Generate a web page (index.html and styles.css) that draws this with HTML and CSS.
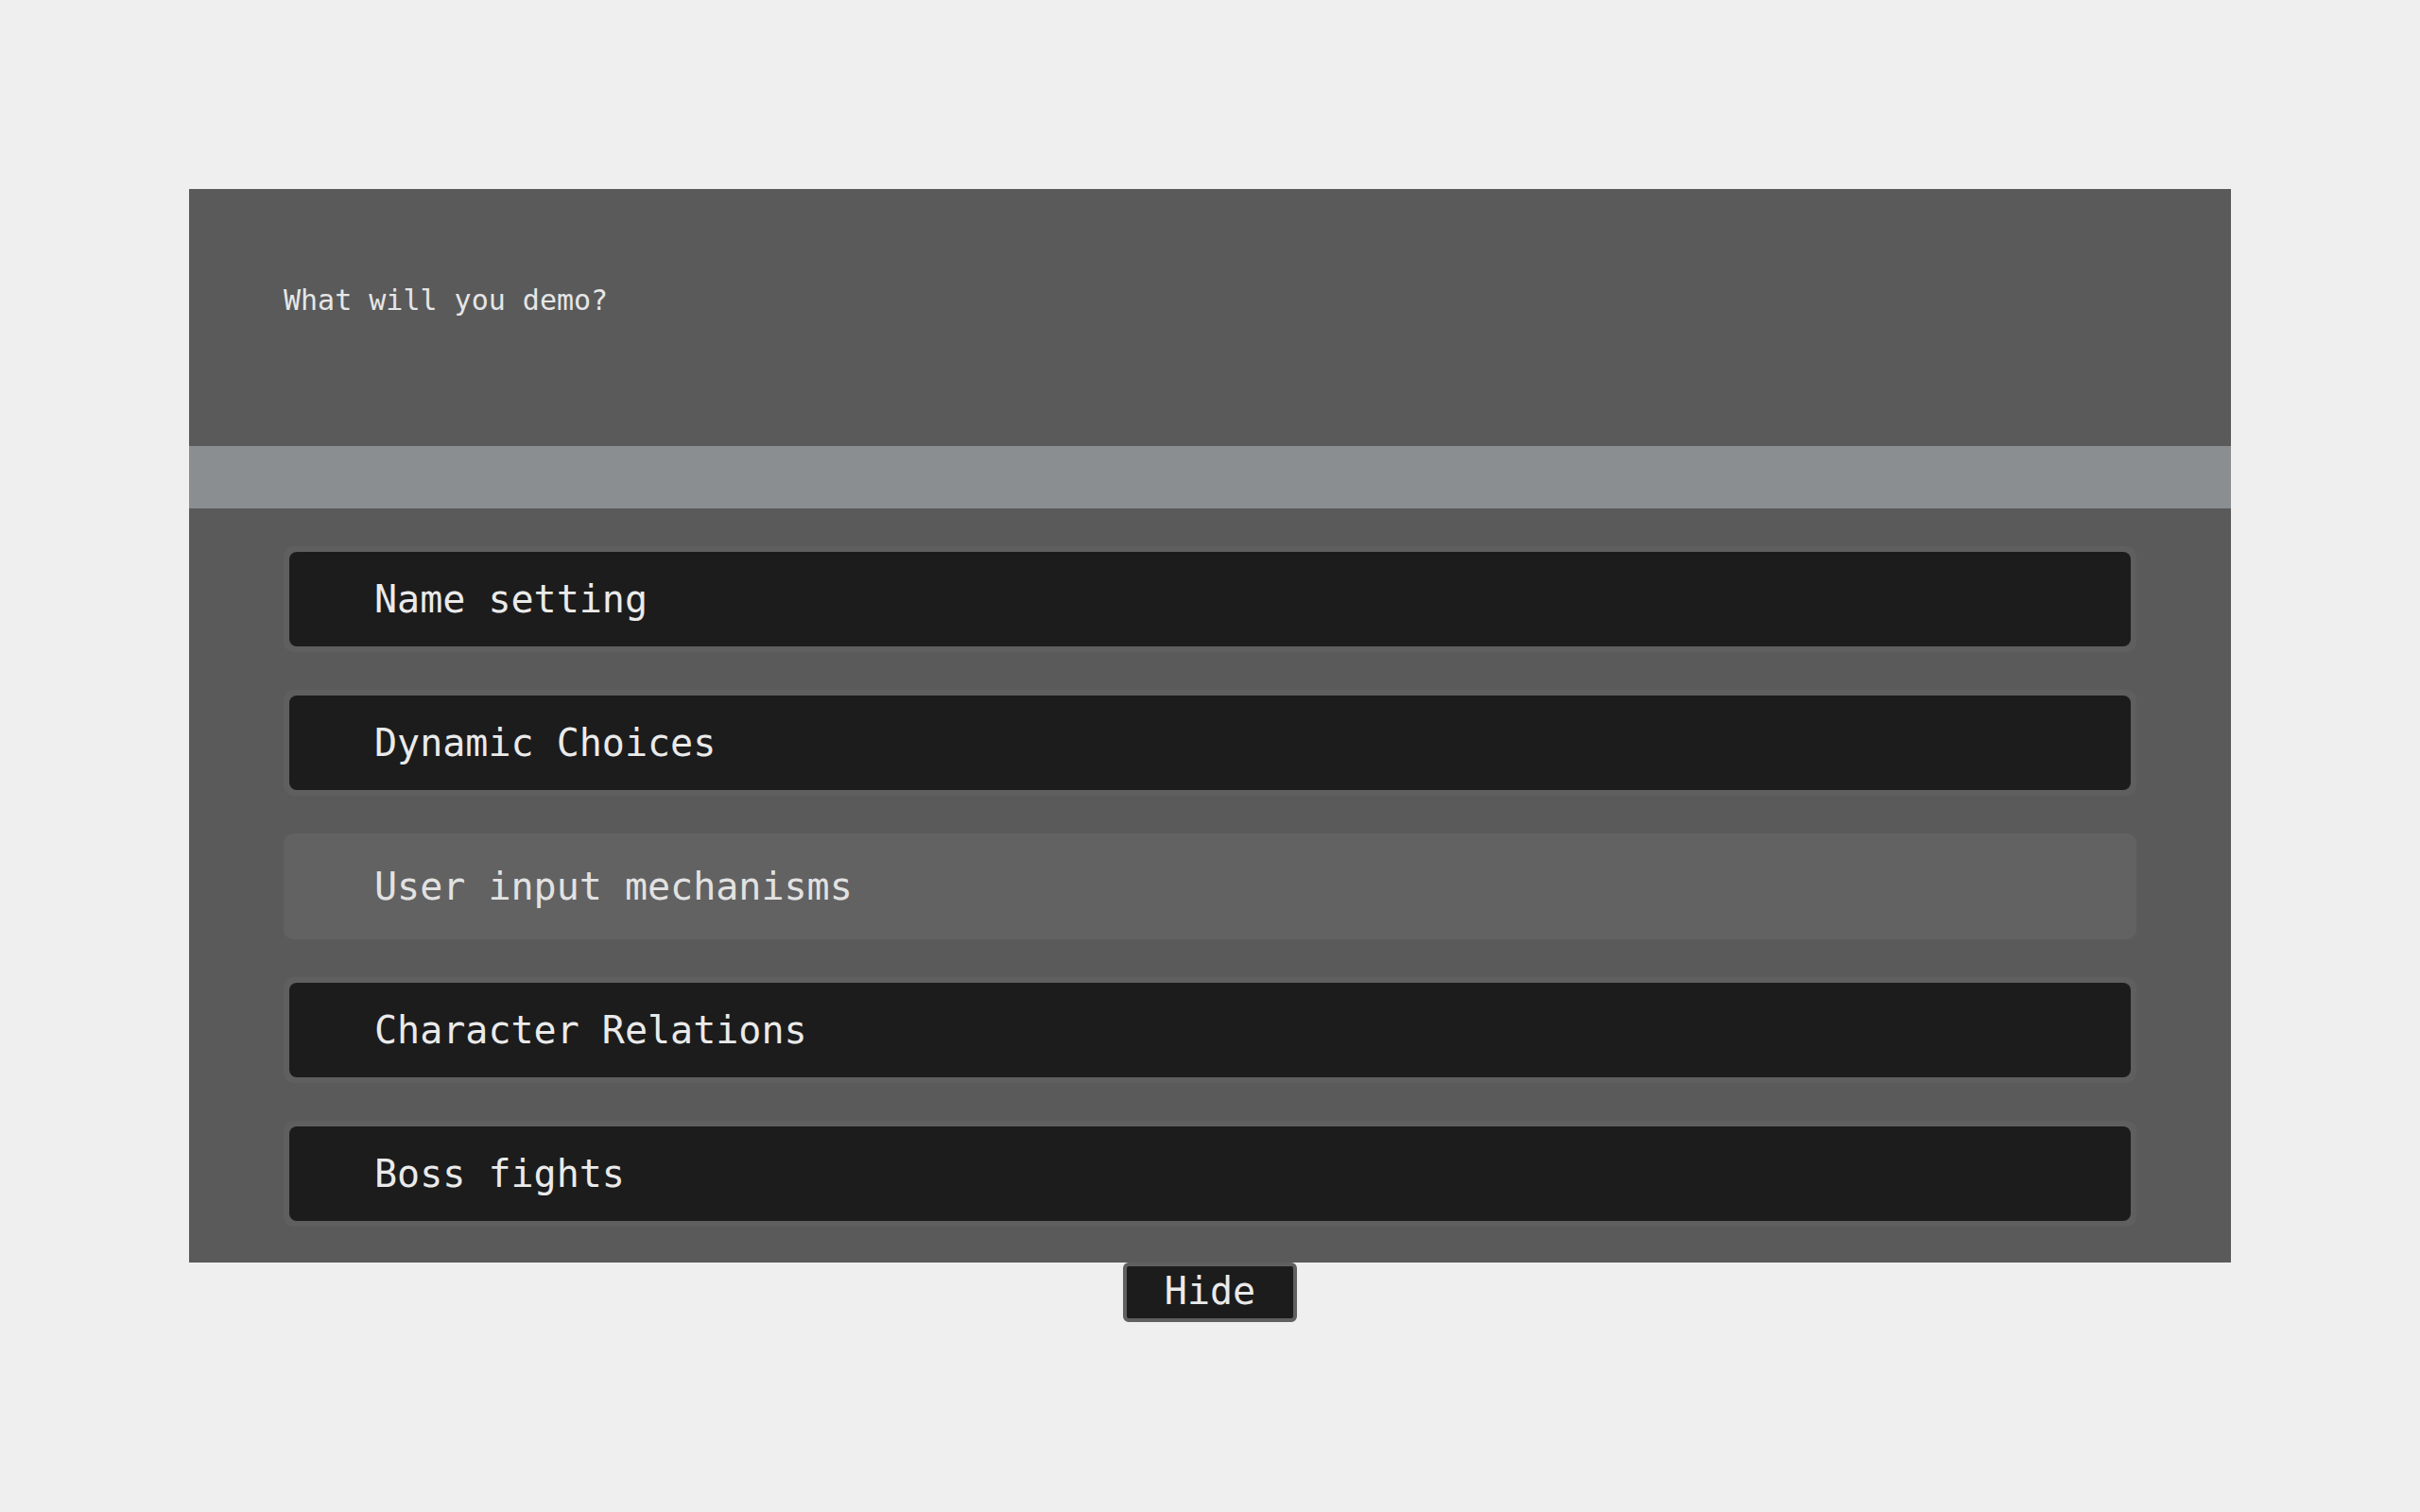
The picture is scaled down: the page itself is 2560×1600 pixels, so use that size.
FILE: index.html
```html
<!DOCTYPE html>
<html lang="en">
<head>
<meta charset="utf-8">
<title>Demo chooser</title>
<link rel="stylesheet" href="styles.css">
</head>
<body>
<main class="stage">
  <section class="panel">
    <header class="prompt">What will you demo?</header>
    <div class="divider"></div>
    <ul class="options">
      <li class="option"><span class="option-inner">Name setting</span></li>
      <li class="option"><span class="option-inner">Dynamic Choices</span></li>
      <li class="option is-hover"><span class="option-inner">User input mechanisms</span></li>
      <li class="option"><span class="option-inner">Character Relations</span></li>
      <li class="option"><span class="option-inner">Boss fights</span></li>
    </ul>
  </section>
  <button class="hide-btn">Hide</button>
</main>
</body>
</html>
```

FILE: styles.css
```css
html, body {
  margin: 0;
  padding: 0;
  background: #efefef;
}
body {
  font-family: "DejaVu Sans Mono", "Liberation Mono", monospace;
  color: #e8e8e8;
}
.stage {
  display: flex;
  flex-direction: column;
  align-items: center;
  padding-top: 200px;
}
.panel {
  width: 2160px;
  background: #5a5a5a;
  display: flex;
  flex-direction: column;
}
.prompt {
  height: 272px;
  box-sizing: border-box;
  padding: 100px 0 0 100px;
  font-size: 30px;
  color: #e6e6e6;
}
.divider {
  height: 66px;
  background: #8a8e91;
}
.options {
  list-style: none;
  margin: 0;
  padding: 40px 100px 38px 100px;
  display: flex;
  flex-direction: column;
  gap: 40px;
}
.option {
  height: 112px;
  box-sizing: border-box;
  padding: 6px;
  background: #5f5f5f;
  border-radius: 10px;
  display: flex;
}
.option-inner {
  flex: 1;
  display: flex;
  align-items: center;
  padding-left: 90px;
  background: #1c1c1c;
  border-radius: 8px;
  font-size: 40px;
  color: #eaeaea;
}
.option.is-hover {
  background: #626262;
}
.option.is-hover .option-inner {
  background: transparent;
  color: #e2e2e2;
}
.hide-btn {
  width: 184px;
  height: 63px;
  box-sizing: border-box;
  border: 4px solid #606060;
  border-radius: 6px;
  background: #1c1c1c;
  color: #eaeaea;
  font-family: "DejaVu Sans Mono", "Liberation Mono", monospace;
  font-size: 40px;
  padding: 0 0 3px 0;
  line-height: 1;
  display: flex;
  align-items: center;
  justify-content: center;
}
```
